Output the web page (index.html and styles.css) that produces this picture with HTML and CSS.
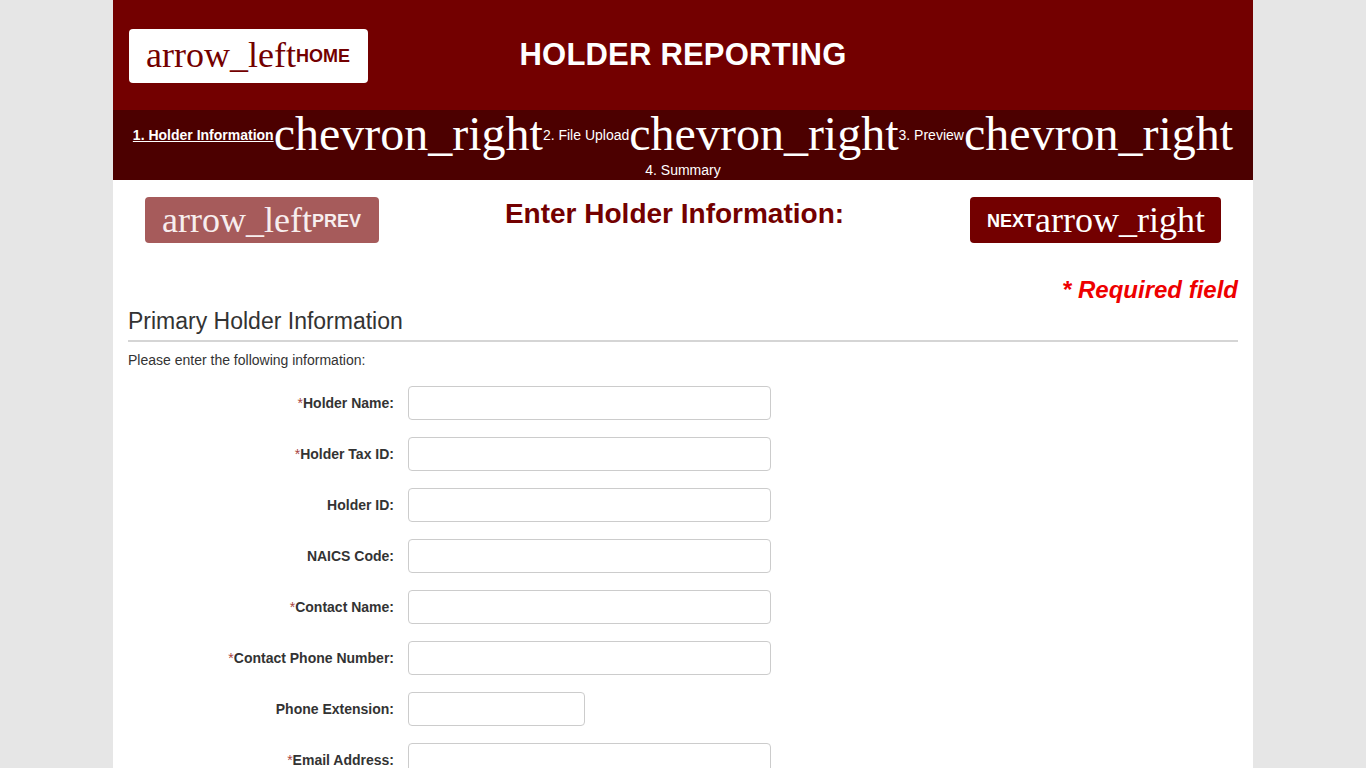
FILE: index.html
```html
<!DOCTYPE html>
<html lang="en">
<head>
<meta charset="utf-8">
<title>Holder Reporting</title>
<link rel="stylesheet" href="styles.css">
</head>
<body>
<div class="page">
  <header class="header">
    <div class="header-left">
      <a class="btn-home" href="#"><span class="mi mi-btn">arrow_left</span>HOME</a>
    </div>
    <h1 class="title">HOLDER REPORTING</h1>
    <div class="header-right"></div>
  </header>
  <nav class="steps"><a class="step step-active" href="#">1. Holder Information</a><wbr><span class="mi mi-step">chevron_right</span><wbr><span class="step">2. File Upload</span><wbr><span class="mi mi-step">chevron_right</span><wbr><span class="step">3. Preview</span><wbr><span class="mi mi-step">chevron_right</span><wbr><span class="step">4. Summary</span></nav>
  <main class="content">
    <div class="nav-row">
      <a class="btn-nav btn-prev" href="#"><span class="mi mi-btn">arrow_left</span>PREV</a>
      <h2 class="page-heading">Enter Holder Information:</h2>
      <a class="btn-nav btn-next" href="#">NEXT<span class="mi mi-btn">arrow_right</span></a>
    </div>
    <p class="required-note">* Required field</p>
    <h3 class="section-title">Primary Holder Information</h3>
    <p class="intro">Please enter the following information:</p>
    <form class="form">
      <div class="form-row"><label class="label"><span class="req">*</span>Holder Name:</label><input class="input" type="text"></div>
      <div class="form-row"><label class="label"><span class="req">*</span>Holder Tax ID:</label><input class="input" type="text"></div>
      <div class="form-row"><label class="label">Holder ID:</label><input class="input" type="text"></div>
      <div class="form-row"><label class="label">NAICS Code:</label><input class="input" type="text"></div>
      <div class="form-row"><label class="label"><span class="req">*</span>Contact Name:</label><input class="input" type="text"></div>
      <div class="form-row"><label class="label"><span class="req">*</span>Contact Phone Number:</label><input class="input" type="text"></div>
      <div class="form-row"><label class="label">Phone Extension:</label><input class="input input-short" type="text"></div>
      <div class="form-row"><label class="label"><span class="req">*</span>Email Address:</label><input class="input" type="text"></div>
      <div class="form-row"><label class="label"><span class="req">*</span>Address:</label><input class="input" type="text"></div>
      <div class="form-row"><label class="label"><span class="req">*</span>City:</label><input class="input" type="text"></div>
    </form>
  </main>
</div>
</body>
</html>
```

FILE: styles.css
```css
html, body {
  margin: 0;
  padding: 0;
}
body {
  background: #e6e6e6;
  font-family: "Liberation Sans", Arial, sans-serif;
  color: #333;
}
.page {
  width: 1140px;
  margin: 0 auto;
  background: #fff;
  min-height: 100vh;
}
.mi {
  font-family: "Liberation Serif", "Times New Roman", serif;
  font-weight: normal;
  font-style: normal;
  white-space: nowrap;
}

/* header */
.header {
  height: 110px;
  background: #730000;
  display: grid;
  grid-template-columns: 1fr auto 1fr;
  align-items: center;
}
.header-left {
  padding-left: 16px;
}
.btn-home {
  display: inline-block;
  box-sizing: border-box;
  height: 54px;
  padding: 8px 18px 0 17px;
  background: #fff;
  color: #730000;
  border-radius: 4px;
  font-size: 18px;
  line-height: 18px;
  font-weight: bold;
  text-decoration: none;
  white-space: nowrap;
  margin-top: 2px;
}
.mi-btn {
  font-size: 36px;
  line-height: 36px;
  vertical-align: -5px;
}
.title {
  margin: 0;
  color: #fff;
  font-size: 31px;
  font-weight: bold;
  letter-spacing: 0.2px;
  padding-bottom: 1px;
}

/* steps */
.steps {
  background: #4c0000;
  color: #fff;
  text-align: center;
  font-size: 14px;
  line-height: 24px;
  height: 70px;
  overflow: hidden;
}
.step {
  color: #fff;
  white-space: nowrap;
}
.step-active {
  font-weight: bold;
  text-decoration: underline;
}
.mi-step {
  font-size: 48px;
  line-height: 48px;
  vertical-align: -10px;
}

/* content */
.content {
  padding: 0 15px;
}
.nav-row {
  display: flex;
  align-items: flex-start;
  padding: 17px 17px 0;
}
.btn-nav {
  display: inline-block;
  box-sizing: border-box;
  height: 46px;
  padding: 5px 18px 0 17px;
  border-radius: 4px;
  color: #fff;
  font-size: 18px;
  line-height: 18px;
  font-weight: bold;
  text-decoration: none;
  white-space: nowrap;
}
.btn-prev {
  background: #a65b5b;
  color: #f7eeee;
}
.btn-next {
  background: #730000;
  padding: 5px 16px 0 17px;
}
.page-heading {
  flex: 1;
  margin: 1px 0 0;
  text-align: center;
  color: #730000;
  font-size: 28px;
  font-weight: bold;
}
.required-note {
  margin: 33px 0 0;
  text-align: right;
  color: #ee0000;
  font-size: 24px;
  font-weight: bold;
  font-style: italic;
}
.section-title {
  margin: 4px 0 0;
  padding-bottom: 5px;
  border-bottom: 2px solid #d5d5d5;
  font-size: 23px;
  font-weight: normal;
  color: #333;
}
.intro {
  margin: 10px 0 0;
  font-size: 14px;
  color: #333;
}

/* form */
.form {
  margin-top: 18px;
}
.form-row {
  display: grid;
  grid-template-columns: 266px 1fr;
  column-gap: 14px;
  align-items: center;
  margin-bottom: 17px;
}
.label {
  text-align: right;
  font-size: 14px;
  font-weight: bold;
  color: #333;
}
.req {
  color: #a94442;
  font-weight: normal;
}
.input {
  box-sizing: border-box;
  width: 363px;
  height: 34px;
  border: 1px solid #ccc;
  border-radius: 4px;
  background: #fff;
  font-family: "Liberation Sans", Arial, sans-serif;
  font-size: 14px;
  padding: 6px 12px;
}
.input-short {
  width: 177px;
}
```
